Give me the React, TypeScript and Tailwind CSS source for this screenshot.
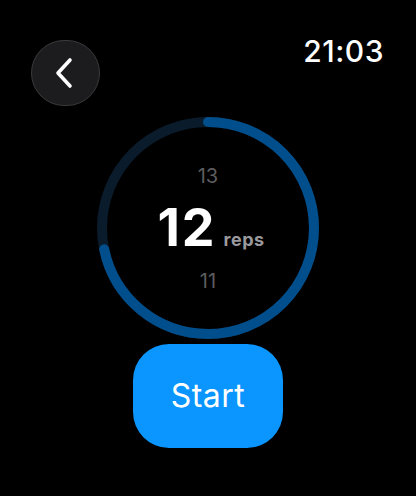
import React from "react";

export default function App() {
  const r = 106;
  const c = 2 * Math.PI * r;
  const frac = 0.717;
  return (
    <div
      className="w-[416px] h-[496px] bg-black overflow-hidden flex flex-col text-white"
      style={{ fontFamily: "Inter, 'Noto Sans', sans-serif" }}
    >
      <div className="flex justify-between items-start pl-[31px] pr-[32px] pt-[40px]">
        <button className="w-[69px] h-[66px] rounded-full bg-[#1c1c1e] border-[1.5px] border-[#3a3a3c] flex items-center justify-center">
          <svg width="30" height="34" viewBox="0 0 30 34" fill="none">
            <path
              d="M19 4 L7 17 L19 30"
              stroke="white"
              strokeWidth="3.6"
              strokeLinecap="round"
              strokeLinejoin="round"
            />
          </svg>
        </button>
        <div className="text-[30px] leading-[36px] mt-[-7px] font-medium tracking-[0.5px]">21:03</div>
      </div>

      <div className="flex justify-center mt-[11px]">
        <div className="relative w-[222px] h-[222px] flex flex-col items-center justify-center">
          <svg className="absolute inset-0" width="222" height="222" viewBox="0 0 222 222">
            <circle cx="111" cy="111" r={r} fill="none" stroke="#0a1b2b" strokeWidth="10" />
            <circle
              cx="111"
              cy="111"
              r={r}
              fill="none"
              stroke="#004f8c"
              strokeWidth="10"
              strokeLinecap="round"
              strokeDasharray={`${frac * c} ${c}`}
              transform="rotate(-90 111 111)"
            />
          </svg>
          <div className="relative flex flex-col items-center mt-[1px]">
            <div className="text-[20px] leading-[24px] text-[#5c5c5e]">13</div>
            <div className="flex items-baseline mt-[12px] ml-[6px]">
              <span className="text-[52px] leading-[56px] font-bold tracking-[2px]">12</span>
              <span className="text-[18px] font-bold text-[#9a9a9e] ml-[7px] tracking-[0.5px]">reps</span>
            </div>
            <div className="text-[20px] leading-[24px] text-[#5c5c5e] mt-[13px]">11</div>
          </div>
        </div>
      </div>

      <div className="flex justify-center mt-[5px]">
        <button className="w-[150px] h-[104px] rounded-[36px] bg-[#0a95ff] text-[32px] text-white flex items-center justify-center tracking-[0.5px]">
          Start
        </button>
      </div>
    </div>
  );
}
